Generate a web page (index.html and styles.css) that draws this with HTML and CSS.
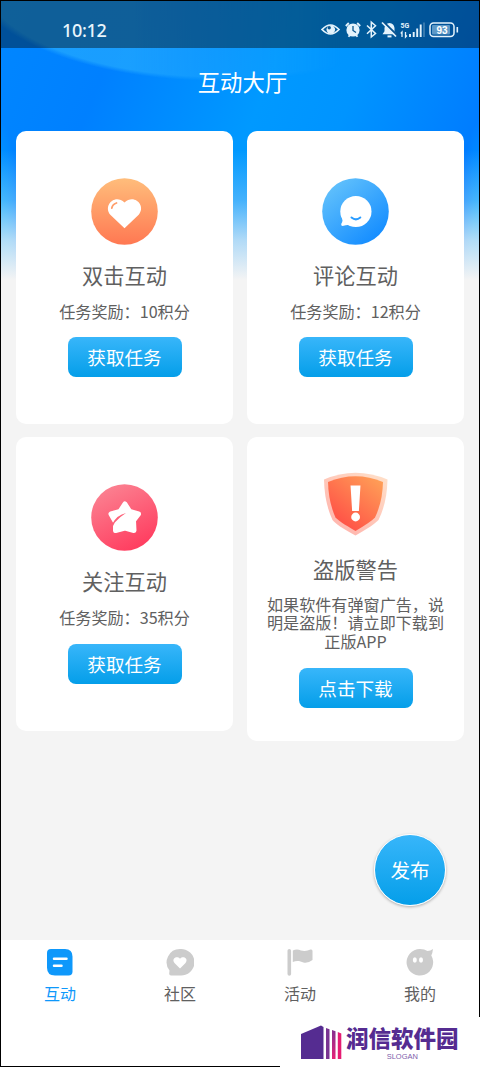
FILE: index.html
```html
<!DOCTYPE html>
<html lang="zh-CN">
<head>
<meta charset="utf-8">
<title>互动大厅</title>
<link rel="stylesheet" href="styles.css">
</head>
<body>
<div class="phone">
  <header class="status">
    <span class="time">10:12</span>
    <svg class="status-icons" width="138" height="20" viewBox="0 0 138 20" fill="none" stroke="#e4f3fc" stroke-width="1.5">
      <path d="M1 9.500Q9.500 .5 18 9.500Q9.500 18.500 1 9.500Z" stroke-width="1.700"/>
      <circle cx="9.800" cy="9.500" r="4.300" fill="#e4f3fc" stroke="none"/>
      <circle cx="8.200" cy="7.800" r="1.700" fill="#09568f" stroke="none"/>
      <circle cx="32" cy="10" r="6.600" fill="#e4f3fc" stroke="none"/>
      <path d="M24.800 6l3-3M39.200 6l-3-3M27.500 16.800l1.800-2.200M36.500 16.800l-1.800-2.200" stroke-width="1.800"/>
      <path d="M32 6v4.500l3 2" stroke="#09568f" stroke-width="1.300"/>
      <path d="M46 5.500l8.500 8-4.200 3.500V2.200l4.200 3.500-8.500 8"/>
      <path d="M61.500 14.200l2-3V8q.5-4.500 5-5 4.500.5 5 5v3.200l2 3z" fill="#e4f3fc" stroke="none"/>
      <path d="M66.500 16.400h4" stroke-width="2"/>
      <path d="M62.500 2l14 13.500" stroke="#085391" stroke-width="2"/>
      <path d="M61 2.500l14 14" stroke-width="1.700"/>
      <text class="net" x="79.500" y="7.500">5G</text>
      <path d="M81 17v-5l-1.200 1.500M84.500 12v5l1.400-1.500" stroke-width="1.300"/>
      <path d="M89 17v-3M92.700 17v-5M96.200 17V8.500M99.700 17V4.500" stroke-width="1.900"/>
      <path d="M103 17V2.500" stroke="#5b92bc" stroke-width="1.200"/>
      <rect x="109" y="3" width="24" height="13.500" rx="3.500"/>
      <rect x="111" y="5" width="18" height="9.500" rx="1" fill="#5d99c7" stroke="none"/>
      <path d="M136.300 7v5.500" stroke-width="1.600"/>
      <text class="charge" x="121" y="13.500" text-anchor="middle">93</text>
    </svg>
  </header>

  <h1 class="heading">互动大厅</h1>

  <main class="cards">
    <section class="card">
      <svg class="badge" viewBox="0 0 67 67">
        <defs><linearGradient id="orange" x2="0" y2="1"><stop stop-color="#ffbd7b"/><stop offset="1" stop-color="#ff7852"/></linearGradient></defs>
        <circle cx="33.500" cy="33.500" r="33.300" fill="url(#orange)"/>
        <path d="M33.500 50.300L19.300 36.700C11.800 27.500 24 15.200 33.500 24.500C43 15.200 55.500 27.500 47.700 36.700Z" fill="#fff"/>
        <path d="M20.800 30.200Q21.300 26.500 25.500 25" fill="none" stroke="#ff9e6b" stroke-width="1.800" stroke-linecap="round"/>
      </svg>
      <h2>双击互动</h2>
      <p>任务奖励：10积分</p>
      <button>获取任务</button>
    </section>
    <section class="card">
      <svg class="badge" viewBox="0 0 67 67">
        <defs><linearGradient id="blue" x1=".15" y1=".1" x2=".8" y2=".9"><stop stop-color="#60c0fc"/><stop offset="1" stop-color="#168eff"/></linearGradient></defs>
        <circle cx="33.500" cy="33.500" r="33.300" fill="url(#blue)"/>
        <circle cx="33.900" cy="33.500" r="15.600" fill="#fff"/>
        <path d="M18.800 37Q22 42 19.200 46Q18.900 48.300 21.500 47.800Q25.500 46.500 29 47.500L30 40Z" fill="#fff"/>
        <path d="M29.500 39.500Q33.900 43.200 38.300 39.500" fill="none" stroke="#2a9cff" stroke-width="2" stroke-linecap="round"/>
      </svg>
      <h2>评论互动</h2>
      <p>任务奖励：12积分</p>
      <button>获取任务</button>
    </section>
    <section class="card follow">
      <svg class="badge" viewBox="0 0 67 67">
        <defs><linearGradient id="pink" x1=".2" x2=".7" y2="1"><stop stop-color="#fb8493"/><stop offset="1" stop-color="#ff3b5e"/></linearGradient></defs>
        <circle cx="33.500" cy="33.500" r="33.300" fill="url(#pink)"/>
        <path d="M34 20L38.800 27.500L47.500 30L42.500 36.500L43 46.500L34 44L24.500 46.500L24.500 38L20 30L29 27.500Z" fill="#fff" stroke="#fff" stroke-width="5" stroke-linejoin="round"/>
        <path d="M21.500 39.500Q26 31 35 29Q28.500 33 23.800 38.500L21.500 43Z" fill="#fd6078"/>
      </svg>
      <h2>关注互动</h2>
      <p>任务奖励：35积分</p>
      <button>获取任务</button>
    </section>
    <section class="card warning">
      <svg class="badge" viewBox="0 0 67 67">
        <defs>
          <linearGradient id="shield" x1=".9" x2=".25" y2=".8"><stop stop-color="#ffa057"/><stop offset="1" stop-color="#ff5748"/></linearGradient>
          <linearGradient id="rim" x1=".9" x2=".25" y2=".8"><stop stop-color="#ffdfc8"/><stop offset="1" stop-color="#ffb9b0"/></linearGradient>
        </defs>
        <path d="M2 7.500Q33.500-6 65.500 7.500Q65 31 56.500 48Q52 53 33.500 63.500Q14 53 10.500 48Q2.500 31 2 7.500Z" fill="url(#rim)"/>
        <path d="M6 10Q33.500-1.500 61 10Q60.500 30 53 45.500Q49.500 49.500 33.500 59Q17 49.500 13.500 45.500Q6.500 30 6 10Z" fill="url(#shield)"/>
        <path d="M28.500 13.500h10l-1.600 25.500h-6.800z" fill="#fff"/>
        <circle cx="33.600" cy="45" r="4.400" fill="#fff"/>
      </svg>
      <h2>盗版警告</h2>
      <p>如果软件有弹窗广告，说明是盗版！请立即下载到正版APP</p>
      <button>点击下载</button>
    </section>
  </main>

  <button class="publish">发布</button>

  <nav class="tabs">
    <a class="tab active">
      <svg width="28" height="28" viewBox="0 0 28 28"><path d="M5 1H19Q26.500 1 26.500 8.500V23.500Q26.500 27.500 22.500 27.500H9Q1 27.500 1 19.500V5Q1 1 5 1Z" fill="#0e98fb"/><path d="M8 10.700H20.500M8 17.800H15.500" stroke="#fff" stroke-width="2.500" stroke-linecap="round"/></svg>
      <span>互动</span>
    </a>
    <a class="tab">
      <svg width="28" height="28" viewBox="0 0 28 28"><path d="M14 1A13.300 13.300 0 1 1 14 27.500H5Q3 27.500 3.200 25.500L3.500 22.500A13.300 13.300 0 0 1 14 1Z" fill="#ccc"/><path d="M14 20.600L8.500 15C5 10.500 11 7.300 14 10.800C17 7.300 23 10.500 19.500 15Z" fill="#fff"/></svg>
      <span>社区</span>
    </a>
    <a class="tab">
      <svg width="28" height="28" viewBox="0 0 28 28"><path d="M3.300 2.700V26" stroke="#ccc" stroke-width="3.600" stroke-linecap="round"/><path d="M6.800 2.500Q11 .7 15 2.500Q20 3.800 24.500 1.500Q26.500 1 26.500 3V12Q22 15.500 17.500 14.500L13 13Q10 12.500 6.800 14Z" fill="#ccc"/></svg>
      <span>活动</span>
    </a>
    <a class="tab">
      <svg width="28" height="28" viewBox="0 0 28 28"><path d="M14 1Q18.500 1 21.500 3Q24.500 2.800 27 1Q26.500 5.500 25.300 7.500A13.300 13.300 0 1 1 14 1Z" fill="#ccc"/><ellipse cx="8.800" cy="12" rx="2" ry="2.700" fill="#fff"/><ellipse cx="15" cy="12" rx="2" ry="2.700" fill="#fff"/></svg>
      <span>我的</span>
    </a>
  </nav>

  <aside class="brand">
    <svg width="41" height="35" viewBox="0 0 41 35">
      <defs><linearGradient id="bars" x2="0" y2="1"><stop stop-color="#83308f"/><stop offset="1" stop-color="#e72378"/></linearGradient></defs>
      <path d="M0 9L20 .5L22.500 2V34H0Z" fill="#552c91"/>
      <path d="M25 3L28.500 4.300V34H25Z" fill="#793492"/>
      <path d="M31 5L34.500 6.300V34H31Z" fill="url(#bars)"/>
      <path d="M36.800 7L40.300 8.500V34H36.800Z" fill="#e51c73"/>
    </svg>
    <div class="brand-text"><strong>润信软件园</strong><small>SLOGAN</small></div>
  </aside>
</div>
</body>
</html>
```
FILE: styles.css
```css
* { box-sizing: border-box; }

body {
  margin: 0;
  font-family: "Noto Sans CJK SC", sans-serif;
  color: #606060;
}

.phone {
  position: relative;
  isolation: isolate;
  display: flex;
  flex-direction: column;
  width: 480px;
  height: 1067px;
  overflow: hidden;
  background:
    linear-gradient(to bottom, rgba(244, 244, 244, 0) 150px, rgba(244, 244, 244, .28) 200px, rgba(244, 244, 244, .72) 240px, #f4f4f4 280px),
    radial-gradient(ellipse 22px 150px at 0 270px, rgba(0, 165, 255, .95) 40%, rgba(0, 165, 255, 0) 100%) 0 0 / 240px 300px no-repeat,
    radial-gradient(ellipse 22px 150px at 240px 270px, rgba(0, 165, 255, .95) 40%, rgba(0, 165, 255, 0) 100%) 240px 0 / 240px 300px no-repeat,
    linear-gradient(112deg, #0087ff 0, #0080ff 22%, #0099ff 50%, #0094ff 65%, #0078ff 92%) 0 0 / 480px 300px no-repeat,
    #f4f4f4;
}

/* pale arc behind the heading, fading out to the right */
.phone::before {
  content: "";
  position: absolute;
  z-index: -1;
  inset: 0 0 auto;
  height: 100px;
  background: radial-gradient(ellipse 250px 106px at 220px -25px, rgba(34, 168, 255, .75) 96%, rgba(34, 168, 255, 0) 100%);
  mask-image: linear-gradient(to right, #000 130px, transparent 340px);
}

/* thin frame round the whole screen */
.phone::after {
  content: "";
  position: absolute;
  inset: 0;
  border: 1px solid #000;
  pointer-events: none;
}

.status {
  display: flex;
  align-items: center;
  justify-content: space-between;
  height: 48px;
  padding: 11px 21px 0 62px;
  background: rgba(0, 0, 0, .4);
}

.time {
  font: 500 18px/24px "Noto Sans", sans-serif;
  letter-spacing: -.3px;
  color: #e9f5fc;
}

.net { font: 700 7px Roboto, sans-serif; fill: #e4f3fc; stroke: none; }
.charge { font: 700 10px "Liberation Sans", sans-serif; fill: #fff; stroke: none; }

.heading {
  margin: 0;
  padding-top: 17px;
  height: 83px;
  font-size: 22.4px;
  font-weight: 400;
  line-height: 32px;
  text-align: center;
  color: #fff;
  padding-left: 5px;
}

.cards {
  display: grid;
  grid-template-columns: 217px 217px;
  gap: 13px 14px;
  align-items: start;
  padding: 0 16px;
}

.card {
  display: flex;
  flex-direction: column;
  align-items: center;
  height: 293px;
  padding-top: 46.5px;
  border-radius: 10px;
  background: #fff;
}

.badge { width: 67px; height: 67px; flex: none; }

.card h2 {
  margin: 18px 0 0;
  font-size: 21.2px;
  font-weight: 400;
  line-height: 24px;
}

.card p {
  margin: 15px 0 0;
  font-size: 16.1px;
  line-height: 18.7px;
  text-align: center;
}

button {
  border: 0;
  padding: 0;
  font-family: inherit;
  color: #fff;
  background: linear-gradient(#38b6fa, #049ee9);
}

.card button {
  width: 114px;
  height: 40px;
  margin-top: 17px;
  border-radius: 8px;
  font-size: 18.6px;
  line-height: 40px;
}

.follow { height: 294px; padding-top: 47px; }
.warning { height: 304px; padding-top: 34.5px; }
.warning p { width: 179px; margin-top: 14px; }

.publish {
  width: 72px;
  height: 72px;
  margin: auto 34px 34px auto;
  padding-bottom: 2px;
  border: 1px solid #fff;
  border-radius: 50%;
  background-origin: border-box;
  box-shadow: 0 1px 3px rgba(0, 0, 0, .3);
  font-size: 19.5px;
}

.tabs {
  display: flex;
  flex: none;
  height: 127px;
  background: #fff;
}

.tab {
  display: flex;
  flex: 1;
  flex-direction: column;
  align-items: center;
  padding-top: 8px;
  font-size: 16px;
  line-height: 22px;
}

.tab span { margin-top: 6px; }
.active { color: #0e98fb; }

.brand {
  position: absolute;
  z-index: 1;
  right: 0;
  bottom: 0;
  display: flex;
  align-items: flex-start;
  gap: 4px;
  width: 200px;
  height: 50px;
  padding: 8px 0 0 21px;
  background: #fff;
  color: #552c91;
}

.brand-text { text-align: center; }
.brand strong { display: block; margin-top: -1px; font-size: 22.5px; font-weight: 900; line-height: 27px; }
.brand small { display: block; margin-top: 1px; font: 7.5px/9px "Liberation Sans", sans-serif; color: #8060ac; }
```
